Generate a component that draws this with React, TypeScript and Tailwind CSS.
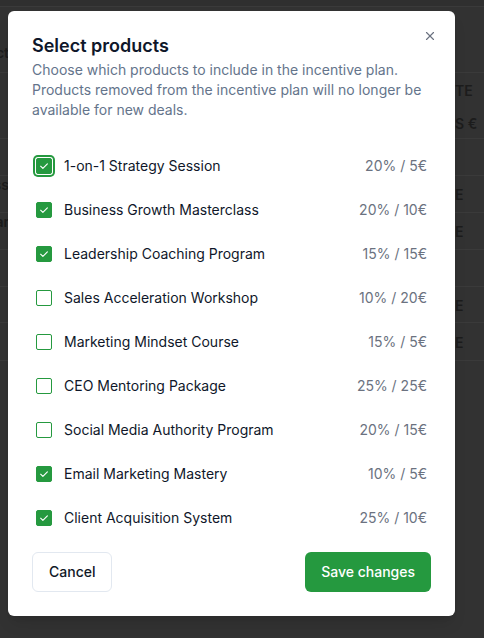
import { X } from 'lucide-react';

const PRODUCTS = [
  { name: '1-on-1 Strategy Session', rate: '20% / 5€', checked: true, focus: true },
  { name: 'Business Growth Masterclass', rate: '20% / 10€', checked: true },
  { name: 'Leadership Coaching Program', rate: '15% / 15€', checked: true },
  { name: 'Sales Acceleration Workshop', rate: '10% / 20€', checked: false },
  { name: 'Marketing Mindset Course', rate: '15% / 5€', checked: false },
  { name: 'CEO Mentoring Package', rate: '25% / 25€', checked: false },
  { name: 'Social Media Authority Program', rate: '20% / 15€', checked: false },
  { name: 'Email Marketing Mastery', rate: '10% / 5€', checked: true },
  { name: 'Client Acquisition System', rate: '25% / 10€', checked: true },
];

// rows of the page behind the overlay
const BG_ROWS = [
  { h: 'h-[66px]', left: 'ct', leftPad: 'pt-[38px]', right: '', right2: '' },
  { h: 'h-[66px]', left: '', leftPad: '', right: 'TE', right2: 'S €' },
  { h: 'h-[37px]', left: '', leftPad: '', right: '', right2: '' },
  { h: 'h-[37px]', left: 'ss', leftPad: 'pt-[1px]', right: 'E', right2: '' },
  { h: 'h-[37px]', left: 'ar', leftPad: 'pt-[1px]', right: 'E', right2: '' },
  { h: 'h-[37px]', left: '', leftPad: '', right: '', right2: '' },
  { h: 'h-[36px]', left: '', leftPad: '', right: 'E', right2: '' },
  { h: 'h-[38px]', left: '', leftPad: '', right: 'E', right2: '' },
];

function Checkbox({ checked, focus }: { checked: boolean; focus?: boolean }) {
  return (
    <span
      className={`flex h-4 w-4 shrink-0 items-center justify-center rounded-[2px] border border-[#25993f] ${
        checked ? 'bg-[#25993f]' : 'bg-white'
      } ${focus ? 'ring-2 ring-[#25993f] ring-offset-1 ring-offset-white' : ''}`}
    >
      {checked && (
        <svg viewBox="0 0 16 16" className="h-3 w-3" fill="none" stroke="white" strokeWidth="1.5" strokeLinecap="round" strokeLinejoin="round">
          <path d="M3.5 8.3l3 3 6-6.2" />
        </svg>
      )}
    </span>
  );
}

export default function App() {
  return (
    <div className="relative h-[638px] w-[484px] overflow-hidden bg-[#323232] font-['Inter',sans-serif]">
      <div className="h-[7px] border-b border-[#3a3a3a] bg-[#2f2f2f]" />
      <div className="flex flex-col">
        {BG_ROWS.map((r, i) => (
          <div key={i} className={`flex ${r.h} justify-between border-b border-[#3a3a3a] text-sm font-semibold text-[#1c1c1c]`}>
            <div className={`flex w-[9px] justify-end overflow-hidden whitespace-nowrap leading-4 ${r.leftPad}`}>{r.left}</div>
            <div
              className={`flex w-[32px] flex-col overflow-hidden whitespace-nowrap pl-[3px] ${
                r.right2 ? 'gap-[13px] pt-[8px]' : 'justify-center pt-[2px]'
              }`}
            >
              {r.right && <span className="leading-5">{r.right}</span>}
              {r.right2 && <span className="leading-5">{r.right2}</span>}
            </div>
          </div>
        ))}
      </div>

      <div className="absolute left-[8px] top-[11px] flex h-[605px] w-[447px] flex-col rounded-md bg-white px-6 pb-6 pt-[21px] shadow-lg">
        <button className="absolute right-[18px] top-[18px] text-[#6b7280]">
          <X size={14} strokeWidth={2} />
        </button>
        <h2 className="text-lg font-semibold leading-7 text-[#0f172a]">Select products</h2>
        <p className="text-sm leading-5 text-[#64748b]">
          Choose which products to include in the incentive plan. Products removed from the incentive plan will no longer be available for new deals.
        </p>

        <div className="mt-6 flex flex-col">
          {PRODUCTS.map((p) => (
            <div key={p.name} className="flex h-11 items-center gap-3 px-1">
              <Checkbox checked={p.checked} focus={p.focus} />
              <span className="flex-1 text-sm text-[#0f172a]">{p.name}</span>
              <span className="text-sm text-[#6b7280]">{p.rate}</span>
            </div>
          ))}
        </div>

        <div className="mt-3 flex items-center justify-between">
          <button className="h-10 rounded-md border border-[#e2e8f0] bg-white px-4 text-sm font-medium text-[#111827]">
            Cancel
          </button>
          <button className="h-10 rounded-md bg-[#25993f] px-4 text-sm font-medium text-white">
            Save changes
          </button>
        </div>
      </div>
    </div>
  );
}
